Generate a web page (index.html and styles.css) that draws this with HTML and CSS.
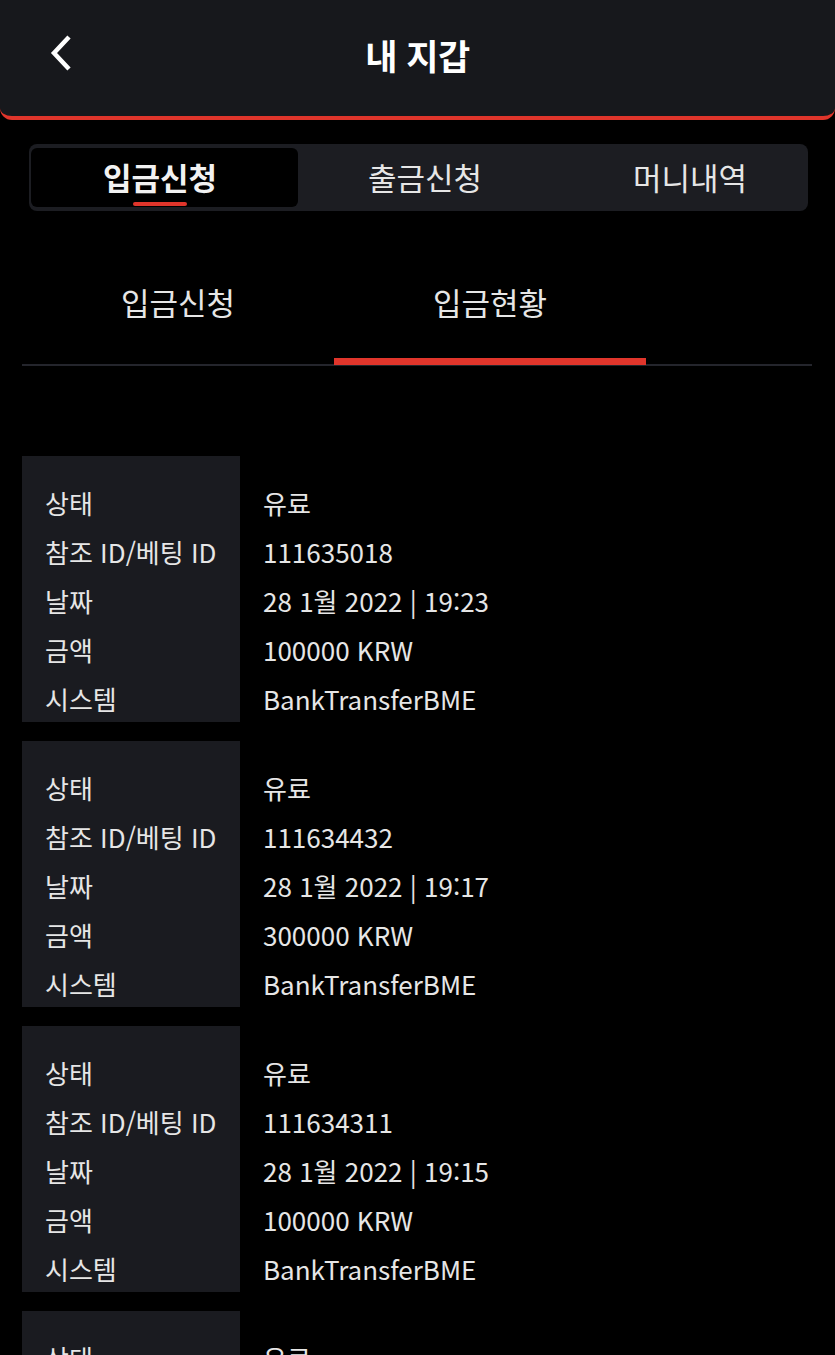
FILE: index.html
```html
<!DOCTYPE html>
<html lang="ko">
<head>
<meta charset="utf-8">
<link rel="stylesheet" href="styles.css">
</head>
<body>
<header class="topbar">
  <button class="back" aria-label="back">
    <svg width="28" height="40" viewBox="0 0 28 40"><path d="M22 4 L7 20 L22 36" fill="none" stroke="#fff" stroke-width="4.5" stroke-linecap="butt" stroke-linejoin="miter"/></svg>
  </button>
  <h1 class="title">내 지갑</h1>
</header>

<nav class="segment">
  <div class="seg active"><span>입금신청</span><i class="seg-line"></i></div>
  <div class="seg">출금신청</div>
  <div class="seg">머니내역</div>
</nav>

<div class="subtabs">
  <div class="subtab">입금신청</div>
  <div class="subtab current">입금현황</div>
</div>

<main class="list">
  <section class="card">
    <div class="labels"><div>상태</div><div>참조 ID/베팅 ID</div><div>날짜</div><div>금액</div><div>시스템</div></div>
    <div class="values"><div>유료</div><div>111635018</div><div>28 1월 2022 | 19:23</div><div>100000 KRW</div><div>BankTransferBME</div></div>
  </section>
  <section class="card">
    <div class="labels"><div>상태</div><div>참조 ID/베팅 ID</div><div>날짜</div><div>금액</div><div>시스템</div></div>
    <div class="values"><div>유료</div><div>111634432</div><div>28 1월 2022 | 19:17</div><div>300000 KRW</div><div>BankTransferBME</div></div>
  </section>
  <section class="card">
    <div class="labels"><div>상태</div><div>참조 ID/베팅 ID</div><div>날짜</div><div>금액</div><div>시스템</div></div>
    <div class="values"><div>유료</div><div>111634311</div><div>28 1월 2022 | 19:15</div><div>100000 KRW</div><div>BankTransferBME</div></div>
  </section>
  <section class="card">
    <div class="labels"><div>상태</div><div>참조 ID/베팅 ID</div><div>날짜</div><div>금액</div><div>시스템</div></div>
    <div class="values"><div>유료</div><div>111634102</div><div>28 1월 2022 | 19:10</div><div>100000 KRW</div><div>BankTransferBME</div></div>
  </section>
</main>
</body>
</html>
```

FILE: styles.css
```css
* { box-sizing: border-box; }
html, body {
  margin: 0;
  padding: 0;
  background: #000;
  color: #e8e8e8;
  font-family: "Noto Sans CJK KR", "Noto Sans", sans-serif;
  overflow: hidden;
  height: 1355px;
}
.topbar {
  position: relative;
  height: 120px;
  background: #17181c;
  border-bottom: 4px solid #e0352b;
  border-radius: 0 0 12px 12px;
  display: flex;
  align-items: center;
  justify-content: center;
}
.back {
  position: absolute;
  left: 47px;
  top: 33px;
  background: none;
  border: 0;
  padding: 0;
  width: 32px;
  height: 40px;
  display: flex;
}
.title {
  margin: 0 0 8px 0;
  font-size: 35px;
  font-weight: 700;
  color: #fff;
  letter-spacing: -0.5px;
}
.segment {
  margin: 24px 27px 0 29px;
  height: 67px;
  background: #1c1d22;
  border-radius: 8px;
  padding: 4px 2px;
  display: grid;
  grid-template-columns: 267px 1fr 1fr;
}
.seg {
  display: flex;
  align-items: center;
  justify-content: center;
  font-size: 31px;
  color: #e6e6e6;
  position: relative;
  padding-bottom: 2px;
}
.seg:nth-child(3) { padding-left: 22px; }
.seg.active {
  background: #000;
  border-radius: 6px;
  font-weight: 700;
  color: #f2f2f2;
  padding-right: 9px;
}
.seg-line {
  position: absolute;
  left: 102px;
  bottom: 1px;
  width: 54px;
  height: 4px;
  border-radius: 2px;
  background: #e0352b;
}
.subtabs {
  margin: 45px 23px 0 22px;
  height: 110px;
  display: flex;
  border-bottom: 2px solid #24252c;
}
.subtab {
  width: 312px;
  font-size: 31px;
  color: #e6e6e6;
  text-align: center;
  padding-top: 23px;
  position: relative;
}
.subtab.current::after {
  content: "";
  position: absolute;
  left: 0;
  right: 0;
  bottom: -1px;
  height: 7px;
  background: #e0352b;
}
.list {
  padding: 90px 0 0 22px;
  display: flex;
  flex-direction: column;
  gap: 19px;
}
.card {
  display: flex;
  height: 266px;
  flex: none;
  font-size: 26px;
  line-height: 49px;
  color: #e6e6e6;
}
.labels {
  width: 218px;
  background: #1a1b20;
  padding: 22px 0 0 23px;
  height: 100%;
  flex: none;
}
.values {
  padding: 22px 0 0 23px;
}
```
